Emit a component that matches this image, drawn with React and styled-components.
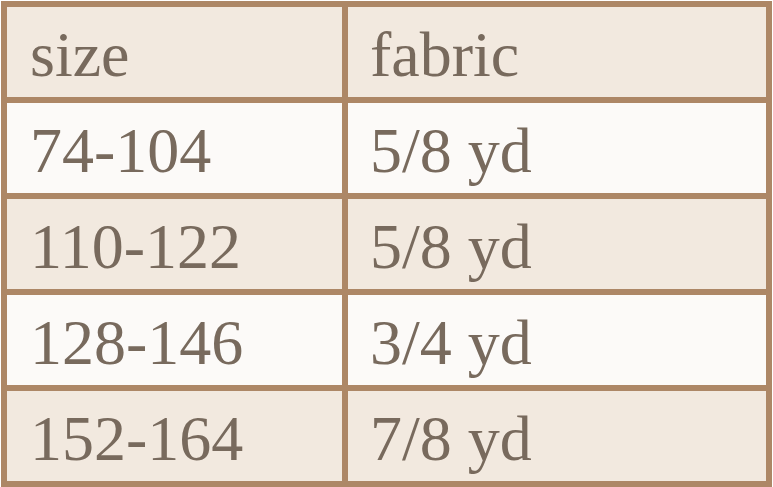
import React from 'react'
import styled, {createGlobalStyle} from 'styled-components'

const GlobalStyle = createGlobalStyle`
  html, body {
    margin: 0;
    padding: 0;
    background: #ffffff;
  }
`

const Wrapper = styled.div`
  padding: 1px;
`

const Table = styled.table`
  border-collapse: collapse;
  width: 771px;
  height: 486px;
  font-family: "Liberation Serif", "DejaVu Serif", serif;
  font-size: 64px;
  color: #786a5d;
  table-layout: fixed;
`

const Row = styled.tr`
  background-color: ${props => (props.light ? '#fcfaf8' : '#f2e9df')};
`

const Cell = styled.td`
  border: 6px solid #ad8766;
  padding: 5px 0 0 ${props => (props.second ? 22 : 23)}px;
  vertical-align: middle;
  line-height: 1;
  white-space: nowrap;
`

const rows = [
  ['size', 'fabric'],
  ['74-104', '5/8 yd'],
  ['110-122', '5/8 yd'],
  ['128-146', '3/4 yd'],
  ['152-164', '7/8 yd'],
]

export default function App() {
  return (
    <Wrapper>
      <GlobalStyle />
      <Table>
        <colgroup>
          <col style={{width: 341}} />
          <col />
        </colgroup>
        <tbody>
          {rows.map((r, i) => (
            <Row key={i} light={i % 2 === 1}>
              <Cell>{r[0]}</Cell>
              <Cell second>{r[1]}</Cell>
            </Row>
          ))}
        </tbody>
      </Table>
    </Wrapper>
  )
}
